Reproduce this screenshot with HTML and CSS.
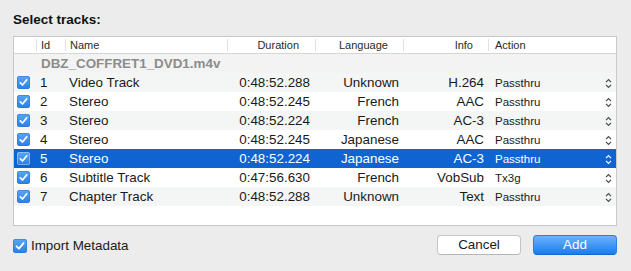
FILE: index.html
```html
<!DOCTYPE html>
<html>
<head>
<meta charset="utf-8">
<link rel="stylesheet" href="styles.css">
</head>
<body>
<div class="dialog">
  <div class="title">Select tracks:</div>
  <div class="table">
    <div class="row header">
      <div class="cell"></div>
      <div class="cell sep">Id</div>
      <div class="cell sep">Name</div>
      <div class="cell sep right h-dur">Duration</div>
      <div class="cell sep h-lang">Language</div>
      <div class="cell sep right h-info">Info</div>
      <div class="cell sep h-act">Action</div>
    </div>
    <div class="group">DBZ_COFFRET1_DVD1.m4v</div>
    <div class="row track odd">
      <div class="cell"><span class="check"><svg viewBox="0 0 13 13"><path d="M3.3 6.8 L5.5 9 L9.8 3.8"/></svg></span></div>
      <div class="cell id">1</div>
      <div class="cell">Video Track</div>
      <div class="cell right dur">0:48:52.288</div>
      <div class="cell right lang">Unknown</div>
      <div class="cell right info">H.264</div>
      <div class="cell act"><span>Passthru</span><svg class="step" viewBox="0 0 7 11"><path d="M1 4.2 L3.5 1.7 L6 4.2 M1 6.8 L3.5 9.3 L6 6.8"/></svg></div>
    </div>
    <div class="row track">
      <div class="cell"><span class="check"><svg viewBox="0 0 13 13"><path d="M3.3 6.8 L5.5 9 L9.8 3.8"/></svg></span></div>
      <div class="cell id">2</div>
      <div class="cell">Stereo</div>
      <div class="cell right dur">0:48:52.245</div>
      <div class="cell right lang">French</div>
      <div class="cell right info">AAC</div>
      <div class="cell act"><span>Passthru</span><svg class="step" viewBox="0 0 7 11"><path d="M1 4.2 L3.5 1.7 L6 4.2 M1 6.8 L3.5 9.3 L6 6.8"/></svg></div>
    </div>
    <div class="row track odd">
      <div class="cell"><span class="check"><svg viewBox="0 0 13 13"><path d="M3.3 6.8 L5.5 9 L9.8 3.8"/></svg></span></div>
      <div class="cell id">3</div>
      <div class="cell">Stereo</div>
      <div class="cell right dur">0:48:52.224</div>
      <div class="cell right lang">French</div>
      <div class="cell right info">AC-3</div>
      <div class="cell act"><span>Passthru</span><svg class="step" viewBox="0 0 7 11"><path d="M1 4.2 L3.5 1.7 L6 4.2 M1 6.8 L3.5 9.3 L6 6.8"/></svg></div>
    </div>
    <div class="row track">
      <div class="cell"><span class="check"><svg viewBox="0 0 13 13"><path d="M3.3 6.8 L5.5 9 L9.8 3.8"/></svg></span></div>
      <div class="cell id">4</div>
      <div class="cell">Stereo</div>
      <div class="cell right dur">0:48:52.245</div>
      <div class="cell right lang">Japanese</div>
      <div class="cell right info">AAC</div>
      <div class="cell act"><span>Passthru</span><svg class="step" viewBox="0 0 7 11"><path d="M1 4.2 L3.5 1.7 L6 4.2 M1 6.8 L3.5 9.3 L6 6.8"/></svg></div>
    </div>
    <div class="row track selected">
      <div class="cell"><span class="check"><svg viewBox="0 0 13 13"><path d="M3.3 6.8 L5.5 9 L9.8 3.8"/></svg></span></div>
      <div class="cell id">5</div>
      <div class="cell">Stereo</div>
      <div class="cell right dur">0:48:52.224</div>
      <div class="cell right lang">Japanese</div>
      <div class="cell right info">AC-3</div>
      <div class="cell act"><span>Passthru</span><svg class="step" viewBox="0 0 7 11"><path d="M1 4.2 L3.5 1.7 L6 4.2 M1 6.8 L3.5 9.3 L6 6.8"/></svg></div>
    </div>
    <div class="row track">
      <div class="cell"><span class="check"><svg viewBox="0 0 13 13"><path d="M3.3 6.8 L5.5 9 L9.8 3.8"/></svg></span></div>
      <div class="cell id">6</div>
      <div class="cell">Subtitle Track</div>
      <div class="cell right dur">0:47:56.630</div>
      <div class="cell right lang">French</div>
      <div class="cell right info">VobSub</div>
      <div class="cell act"><span>Tx3g</span><svg class="step" viewBox="0 0 7 11"><path d="M1 4.2 L3.5 1.7 L6 4.2 M1 6.8 L3.5 9.3 L6 6.8"/></svg></div>
    </div>
    <div class="row track odd">
      <div class="cell"><span class="check"><svg viewBox="0 0 13 13"><path d="M3.3 6.8 L5.5 9 L9.8 3.8"/></svg></span></div>
      <div class="cell id">7</div>
      <div class="cell">Chapter Track</div>
      <div class="cell right dur">0:48:52.288</div>
      <div class="cell right lang">Unknown</div>
      <div class="cell right info">Text</div>
      <div class="cell act"><span>Passthru</span><svg class="step" viewBox="0 0 7 11"><path d="M1 4.2 L3.5 1.7 L6 4.2 M1 6.8 L3.5 9.3 L6 6.8"/></svg></div>
    </div>
    <div class="filler"></div>
  </div>
  <div class="footer">
    <label class="meta"><span class="check big"><svg viewBox="0 0 13 13"><path d="M3.3 6.8 L5.5 9 L9.8 3.8"/></svg></span>Import Metadata</label>
    <div class="buttons">
      <button class="btn cancel">Cancel</button>
      <button class="btn add">Add</button>
    </div>
  </div>
</div>
</body>
</html>
```

FILE: styles.css
```css
html, body {
  margin: 0;
  padding: 0;
  background: #ececec;
  font-family: "Liberation Sans", Arial, sans-serif;
  color: #1a1a1a;
  width: 631px;
  height: 271px;
  overflow: hidden;
}

.dialog {
  padding: 12px 14px 0 13px;
}

.title {
  font-weight: bold;
  font-size: 13.5px;
  line-height: 16px;
  height: 16px;
  margin-bottom: 8px;
  color: #111;
}

.table {
  width: 602px;
  border: 1px solid #c8c8c8;
  background: #fff;
}

.row {
  display: grid;
  grid-template-columns: 22px 29px 162px 88px 88px 85px 1fr;
  align-items: center;
}

.cell {
  white-space: nowrap;
  overflow: hidden;
}

.header {
  height: 16px;
  border-bottom: 1px solid #d6d6d6;
  font-size: 11px;
  line-height: 16px;
  color: #2a2a2a;
  background: #fff;
}

.header .sep {
  border-left: 1px solid #e2e2e2;
  height: 12px;
  line-height: 12px;
  padding-left: 4px;
}

.header .right {
  text-align: right;
}

.header .h-dur { padding-right: 16px; }
.header .h-lang { padding-left: 23px; }
.header .h-info { padding-right: 15px; }
.header .h-act { padding-left: 6px; }

.group {
  height: 19px;
  line-height: 19px;
  padding-left: 27px;
  padding-top: 0;
  box-sizing: border-box;
  font-size: 13.4px;
  font-weight: bold;
  color: #8c8c8c;
  background: #f3f3f3;
}

.track {
  height: 19px;
  line-height: 19px;
  font-size: 13.4px;
  background: #fff;
}

.track.odd {
  background: #f4f5f5;
}

.track.selected {
  background: #0f64d2;
  color: #fff;
}

.track .cell {
  padding-top: 1px;
  height: 18px;
  line-height: 18px;
}

.track .id { padding-left: 4px; }
.track .cell:nth-child(3) { padding-left: 4px; }
.track .dur { padding-right: 5px; text-align: right; }
.track .lang { padding-right: 4px; text-align: right; }
.track .info { padding-right: 4px; text-align: right; }

.track .act {
  display: flex;
  align-items: center;
  justify-content: space-between;
  padding-left: 7px;
  padding-right: 4px;
  font-size: 11.5px;
}

.step {
  width: 7px;
  height: 11px;
  fill: none;
  stroke: #4a4a4a;
  stroke-width: 1.2;
}

.selected .step {
  stroke: #fff;
}

.check {
  display: inline-flex;
  width: 13px;
  height: 13px;
  border-radius: 3px;
  background: linear-gradient(#5aa7f5, #2a7fe6);
  box-shadow: inset 0 0 0 0.5px #2a72d0;
  vertical-align: middle;
  margin-left: 3px;
  margin-top: -1px;
}

.selected .check {
  box-shadow: inset 0 0 0 0.5px #bcd6f5;
}

.check svg {
  width: 13px;
  height: 13px;
  fill: none;
  stroke: #fff;
  stroke-width: 1.7;
  stroke-linecap: round;
  stroke-linejoin: round;
}

.filler {
  height: 19px;
  background: #fff;
}

.footer {
  display: flex;
  justify-content: space-between;
  align-items: center;
  margin-top: 9px;
  width: 604px;
}

.meta {
  display: flex;
  align-items: center;
  font-size: 13.4px;
  color: #1a1a1a;
  margin-top: 1px;
}

.meta .check.big {
  width: 14px;
  height: 14px;
  margin-left: 0;
  margin-right: 4px;
  margin-top: 0;
}

.meta .check.big svg {
  width: 14px;
  height: 14px;
}

.buttons {
  display: flex;
  gap: 12px;
}

.btn {
  width: 84px;
  height: 20px;
  border-radius: 4px;
  font-family: "Liberation Sans", Arial, sans-serif;
  font-size: 13.4px;
  padding: 0;
  line-height: 18px;
}

.cancel {
  background: #fff;
  border: 1px solid #c5c5c5;
  border-bottom-color: #b5b5b5;
  color: #1a1a1a;
}

.add {
  background: linear-gradient(#6cb3fa, #1a7cf0);
  border: 1px solid #2a7ee6;
  border-bottom-color: #1466d4;
  color: #fff;
}
```
